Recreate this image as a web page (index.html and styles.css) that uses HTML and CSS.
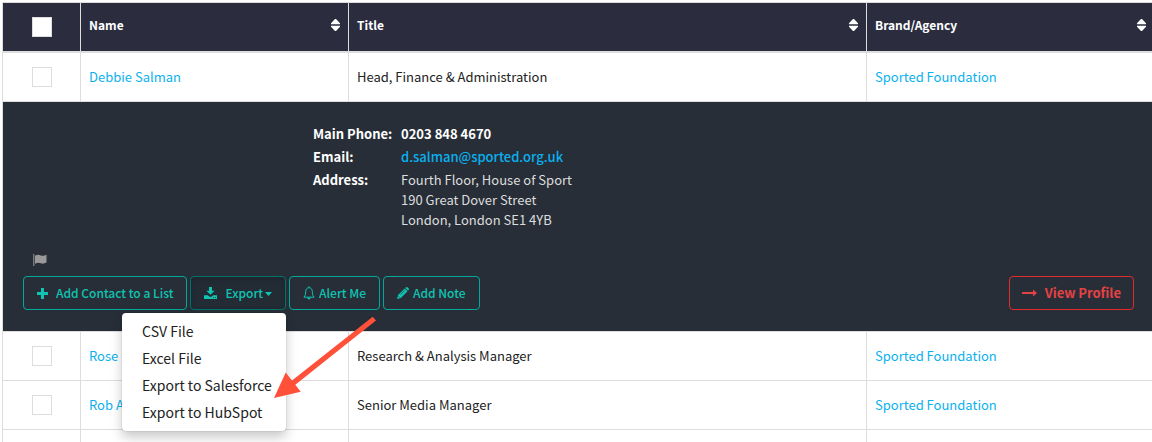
FILE: index.html
```html
<!DOCTYPE html>
<html lang="en">
<head>
<meta charset="utf-8">
<title>Contacts</title>
<link rel="stylesheet" href="styles.css">
</head>
<body>
<svg class="sprite" aria-hidden="true">
  <symbol id="sort" viewBox="0 0 9 12"><path d="M4 0h1L9 4.300V5.200H0V4.300zM4 12h1L9 7.700V6.800H0V7.700z" fill="currentColor"/></symbol>
</svg>
<main class="page">
  <table class="contacts">
    <colgroup><col class="col-check"><col class="col-name"><col><col class="col-brand"></colgroup>
    <thead>
      <tr>
        <th class="check-cell"><input class="check" type="checkbox" aria-label="Select all"></th>
        <th><div class="head"><span>Name</span><svg class="sort"><use href="#sort"/></svg></div></th>
        <th><div class="head"><span>Title</span><svg class="sort"><use href="#sort"/></svg></div></th>
        <th><div class="head"><span>Brand/Agency</span><svg class="sort"><use href="#sort"/></svg></div></th>
      </tr>
    </thead>
    <tbody>
      <tr class="expanded">
        <td class="check-cell"><input class="check" type="checkbox" aria-label="Select Debbie Salman"></td>
        <td><a class="link" href="#">Debbie Salman</a></td>
        <td>Head, Finance &amp; Administration</td>
        <td><a class="link" href="#">Sported Foundation</a></td>
      </tr>
      <tr>
        <td class="detail" colspan="4">
          <dl class="info">
            <dt>Main Phone:</dt><dd class="phone">0203 848 4670</dd>
            <dt>Email:</dt><dd class="email"><a class="link" href="#">d.salman@sported.org.uk</a></dd>
            <dt>Address:</dt><dd class="address">Fourth Floor, House of Sport<br>190 Great Dover Street<br>London, London SE1 4YB</dd>
          </dl>
          <svg class="flag" viewBox="0 0 14 12" aria-hidden="true"><path d="M0.300 0h1v12h-1zM2 1.700C4.500 0.300 6 0.700 7.800 1.500C9.500 2.200 11 1.800 13.500 0.700V8.600C11 9.800 9.500 10 7.800 9.200C6 8.400 4.500 8.400 2 9.700z" fill="#999"/></svg>
          <div class="actions">
            <button class="btn" type="button"><svg class="ico ico-plus" viewBox="0 0 11 11"><path d="M4 0h3v4h4v3H7v4H4V7H0V4h4z" fill="currentColor"/></svg>Add Contact to a List</button>
            <div class="dropdown">
              <button class="btn btn-open" type="button" aria-expanded="true"><svg class="ico ico-down" viewBox="0 0 13 12"><path d="M5 0h3v3.700h2.700L6.500 7.800L2.300 3.700H5zM0 8.300h3.800l1.500 1.200q1.200 0.800 2.400 0L9.200 8.300H13V12H0z" fill="currentColor"/><path d="M9 10.500h1M11 10.500h1" stroke="#232b35" stroke-width="0.800"/></svg>Export<svg class="caret" viewBox="0 0 7 4"><path d="M0 0h7L3.500 4z" fill="currentColor"/></svg></button>
              <div class="menu">
                <a class="menu-item" href="#">CSV File</a>
                <a class="menu-item" href="#">Excel File</a>
                <a class="menu-item" href="#">Export to Salesforce</a>
                <a class="menu-item" href="#">Export to HubSpot</a>
              </div>
              <svg class="pointer" viewBox="0 0 104 84" aria-hidden="true"><path d="M99.700 1.800L103 5.500L22.300 69.700L27.700 76.700L1 83L12.700 57.500L19 65.500z" fill="#ff503a"/></svg>
            </div>
            <button class="btn" type="button"><svg class="ico ico-bell" viewBox="0 0 12 14"><path d="M6 0.300v1.200M0.900 11.200C2.600 9.500 2.500 7.500 2.700 5.300C2.900 3 4.200 1.700 6 1.700S9.100 3 9.300 5.300C9.500 7.500 9.400 9.500 11.100 11.200z" fill="none" stroke="currentColor"/><path d="M4.300 11.700h3.400Q7.500 13.500 6 13.500T4.300 11.700z" fill="currentColor"/></svg>Alert Me</button>
            <button class="btn" type="button"><svg class="ico ico-pen" viewBox="0 0 12 12"><path d="M7.700 1.500L10.500 4.300L3.900 10.900L0 12L1.100 8.100zM8.300 0.900L9.200 0.200Q10 -0.200 10.700 0.400L11.600 1.300Q12.200 2 11.700 2.800L11.100 3.700z" fill="currentColor"/><path d="M3.500 7.600L7.800 3.400M1.600 9.200L2.900 10.500" stroke="#272e38" stroke-width="0.600"/></svg>Add Note</button>
            <button class="btn btn-profile" type="button"><svg class="ico ico-arrow" viewBox="0 0 15 8"><path d="M0 3h11V0.500L15 4L11 7.500V5H0z" fill="currentColor"/></svg>View Profile</button>
          </div>
        </td>
      </tr>
      <tr>
        <td class="check-cell"><input class="check" type="checkbox" aria-label="Select Rose"></td>
        <td><a class="link" href="#">Rose C</a></td>
        <td>Research &amp; Analysis Manager</td>
        <td><a class="link" href="#">Sported Foundation</a></td>
      </tr>
      <tr>
        <td class="check-cell"><input class="check" type="checkbox" aria-label="Select Rob"></td>
        <td><a class="link" href="#">Rob A</a></td>
        <td>Senior Media Manager</td>
        <td><a class="link" href="#">Sported Foundation</a></td>
      </tr>
      <tr><td></td><td></td><td></td><td></td></tr>
    </tbody>
  </table>
</main>
</body>
</html>
```
FILE: styles.css
```css
* { box-sizing: border-box; }
body {
  margin: 0;
  background: #fff;
  color: #222;
  font: 13px/20px "Noto Sans CJK SC", "Open Sans", sans-serif;
}
.sprite { position: absolute; width: 0; height: 0; }
.page { height: 100vh; overflow: hidden; padding: 2px 0 0 2px; }
.contacts {
  width: calc(100% + 3px);
  table-layout: fixed;
  border-collapse: collapse;
}
.col-check { width: 78px; }
.col-name { width: 268px; }
.col-brand { width: 288px; }
th, td {
  height: 49px;
  padding: 0 8px;
  border: 1px solid #ddd;
  text-align: left;
  vertical-align: middle;
}
th {
  background: #2b2d3f;
  color: #fff;
  border-bottom-width: 2px;
  font-size: 12px;
  font-weight: 700;
}
.expanded td { height: 50px; }
.head {
  display: flex;
  align-items: center;
  justify-content: space-between;
  padding-bottom: 4px;
}
.sort { width: 9px; height: 12px; }
.check-cell { text-align: center; }
.check {
  appearance: none;
  display: block;
  width: 20px;
  height: 20px;
  margin: 0 auto;
  border: 1px solid #ddd;
  background: #fff;
}
.link { color: #0ab1ef; text-decoration: none; }
.detail { background: #272e38; padding: 20px; }
.info {
  display: grid;
  grid-template-columns: 80px 1fr;
  column-gap: 8px;
  margin: 0 0 24px 290px;
  color: #fff;
  line-height: 23px;
}
.info dt { font-weight: 700; white-space: nowrap; }
.info dd { margin: 0; }
.info .phone { font-weight: 700; }
.info .email { font-weight: 500; }
.info .address { color: #ddd; line-height: 20px; padding-top: 2px; }
.flag { display: block; width: 14px; height: 12px; margin: 0 0 10px 10px; }
.actions { display: flex; align-items: center; gap: 3px; padding-bottom: 1px; }
.btn {
  display: flex;
  align-items: center;
  height: 34px;
  padding: 0 13px;
  border: 1px solid #00aa9b;
  border-radius: 4px;
  background: transparent;
  color: #10c4b2;
  font: inherit;
  font-size: 12px;
  font-weight: 500;
  white-space: nowrap;
}
.ico { flex: none; }
.ico-plus { width: 11px; height: 11px; margin-right: 8px; }
.ico-down { width: 13px; height: 12px; margin-right: 8px; }
.ico-bell { width: 12px; height: 14px; margin-right: 4px; }
.ico-pen { width: 12px; height: 12px; margin-right: 4px; }
.ico-arrow { width: 15px; height: 8px; margin-right: 8px; }
.caret { width: 7px; height: 4px; margin: 2px 0 0 2px; }
.btn-open { border-color: #007469; background: #232b35; box-shadow: inset 0 2px 4px #1d242d; }
.btn-profile {
  margin-left: auto;
  padding: 0 12px;
  border-color: #e22b2b;
  color: #e64144;
  font-size: 13px;
  font-weight: 700;
}
.dropdown { position: relative; }
.menu {
  position: absolute;
  z-index: 1;
  top: 37px;
  right: 0;
  width: 164px;
  padding: 5px 0;
  border-radius: 4px;
  background: #fff;
  box-shadow: 0 6px 12px rgba(0, 0, 0, 0.22), 0 0 1px rgba(0, 0, 0, 0.4);
}
.menu-item {
  display: block;
  padding: 0 20px;
  color: #222;
  font-size: 14px;
  line-height: 27px;
  text-decoration: none;
  white-space: nowrap;
}
.pointer {
  position: absolute;
  z-index: 2;
  top: 39px;
  left: 83px;
  width: 104px;
  height: 84px;
}
```
